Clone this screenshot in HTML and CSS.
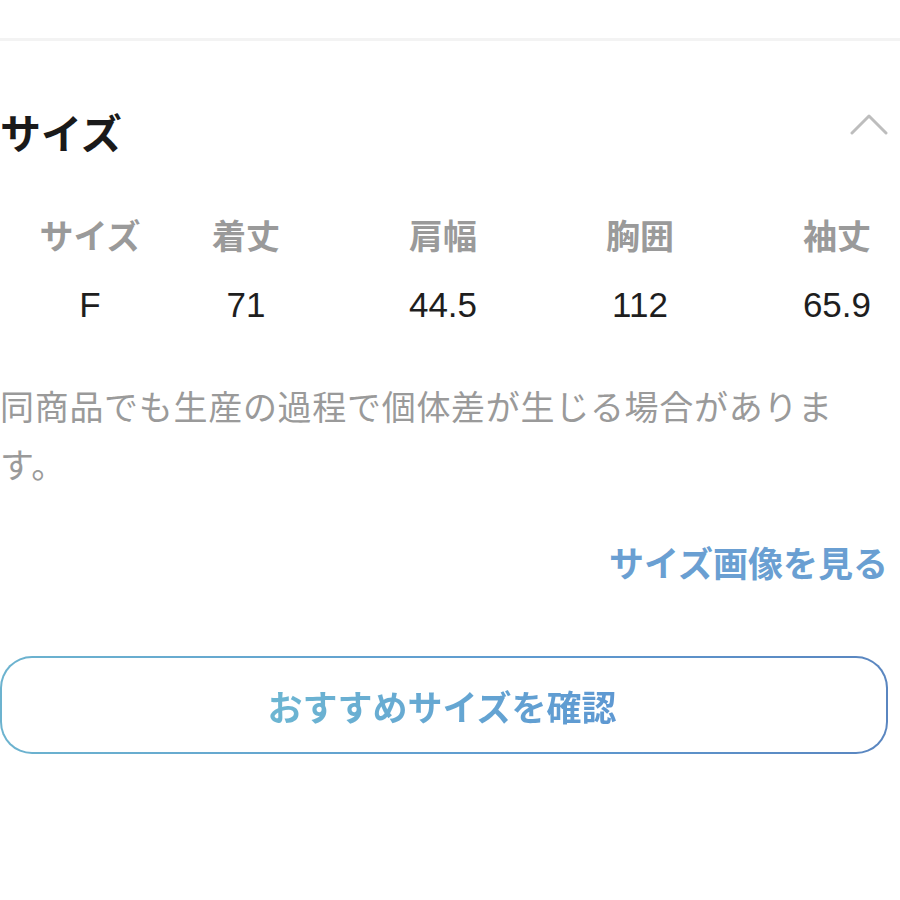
FILE: index.html
```html
<!DOCTYPE html>
<html lang="ja">
<head>
<meta charset="utf-8">
<link rel="stylesheet" href="styles.css">
</head>
<body>
<div class="divider"></div>
<section class="section">
  <div class="head">
    <h2 class="title">サイズ</h2>
    <svg class="chevron" width="38" height="22" viewBox="0 0 38 22"><path d="M2 20 L19 3 L36 20" fill="none" stroke="#bdbdbd" stroke-width="3" stroke-linecap="round" stroke-linejoin="round"/></svg>
  </div>
  <div class="table">
    <div class="th c1">サイズ</div>
    <div class="th c2">着丈</div>
    <div class="th c3">肩幅</div>
    <div class="th c4">胸囲</div>
    <div class="th c5">袖丈</div>
    <div class="td c1">F</div>
    <div class="td c2">71</div>
    <div class="td c3">44.5</div>
    <div class="td c4">112</div>
    <div class="td c5">65.9</div>
  </div>
  <p class="note">同商品でも生産の過程で個体差が生じる場合があります。</p>
  <div class="link-row"><a class="link">サイズ画像を見る</a></div>
  <div class="btn"><span class="btn-text">おすすめサイズを確認</span></div>
</section>
</body>
</html>
```
FILE: styles.css
```css
html, body {
  margin: 0;
  padding: 0;
  background: #ffffff;
  overflow: hidden;
}
body {
  font-family: "Liberation Sans", "Noto Sans CJK JP", sans-serif;
  color: #1a1a1a;
}
.divider {
  margin-top: 38px;
  height: 3px;
  background: #f3f3f3;
}
.section {
  width: 888px;
}
.head {
  display: flex;
  justify-content: space-between;
  align-items: center;
  margin-top: 60px;
  height: 60px;
}
.title {
  margin: 0;
  font-size: 41px;
  font-weight: 700;
  line-height: 60px;
  color: #1a1a1a;
  font-family: "Noto Sans CJK JP", sans-serif;
}
.chevron {
  margin-top: -14px;
}
.table {
  display: grid;
  grid-template-columns: 180px 132px 262px 132px 182px;
  margin-top: 49px;
}
.th, .td {
  text-align: center;
  white-space: nowrap;
}
.th.c5, .td.c5 {
  text-align: right;
  padding-right: 17px;
}
.th {
  font-family: "Noto Sans CJK JP", sans-serif;
  font-size: 34px;
  font-weight: 700;
  color: #9a9a9a;
  line-height: 50px;
}
.td {
  font-size: 35px;
  color: #1e1e1e;
  line-height: 50px;
  margin-top: 20px;
}
.note {
  margin: 47px 0 0 0;
  width: 860px;
  font-family: "Noto Sans CJK JP", sans-serif;
  font-size: 34px;
  letter-spacing: 0.7px;
  line-height: 58px;
  color: #9a9a9a;
}
.link-row {
  display: flex;
  justify-content: flex-end;
  margin-top: 44px;
}
.link {
  font-family: "Noto Sans CJK JP", sans-serif;
  font-size: 35px;
  font-weight: 700;
  line-height: 50px;
  color: #6a9fd2;
}
.btn {
  margin-top: 69px;
  height: 94px;
  border-radius: 32px;
  border: 2px solid transparent;
  background: linear-gradient(#fff, #fff) padding-box, linear-gradient(90deg, #6cb3cf, #5e9ad0 60%, #5a86c0) border-box;
  display: flex;
  align-items: center;
  justify-content: center;
  padding-right: 4px;
}
.btn-text {
  font-family: "Noto Sans CJK JP", sans-serif;
  font-size: 35px;
  font-weight: 700;
  background: linear-gradient(90deg, #6db6d2, #5e98d2);
  -webkit-background-clip: text;
  background-clip: text;
  color: transparent;
}
```
